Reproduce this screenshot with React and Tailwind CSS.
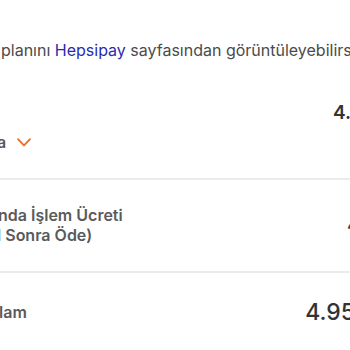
const App = () => {
  return (
    <div
      className="w-[350px] h-[350px] overflow-hidden bg-white text-[#4b4b4b]"
      style={{ fontFamily: "Inter, 'Noto Sans', sans-serif" }}
    >
      <div className="pt-[38px] whitespace-nowrap text-[16px] leading-[24px] pl-px">
        planını <span className="text-[#2b2bb0]">Hepsipay</span> sayfasından görüntüleyebilirsiniz.
      </div>

      <div className="mt-[39px] pl-[333px] whitespace-nowrap text-[19px] font-semibold leading-[24px] text-[#333]">
        4.95 TL
      </div>

      <div className="mt-[5px] flex items-center gap-[11px] whitespace-nowrap text-[16px] font-semibold leading-[24px] text-[#5a5a5a]">
        <span className="-ml-[3px]">a</span>
        <svg width="14" height="9" viewBox="0 0 14 9" fill="none">
          <path d="M1 1.2 L7 7.4 L13 1.2" stroke="#f06a2a" strokeWidth="1.8" strokeLinecap="round" strokeLinejoin="round" />
        </svg>
      </div>

      <div className="mt-[24px] h-[2px] bg-[#ebebeb]" />

      <div className="mt-[25px] flex items-center justify-between whitespace-nowrap">
        <div className="text-[16px] font-semibold leading-[20px] text-[#5a5a5a] -ml-[2px]">
          <div>nda İşlem Ücreti</div>
          <div className="-ml-[1px]">l Sonra Öde)</div>
        </div>
        <div className="text-[16px] font-semibold text-[#444] mr-[-8px]">4</div>
      </div>

      <div className="mt-[26px] h-[2px] bg-[#ebebeb]" />

      <div className="mt-[25px] flex items-center justify-between whitespace-nowrap">
        <span className="text-[16px] font-semibold leading-[24px] text-[#5a5a5a] -ml-[1px]">lam</span>
        <span className="text-[23px] font-medium leading-[28px] text-[#333] mr-[-5px]">4.95</span>
      </div>
    </div>
  );
};

export default App;
